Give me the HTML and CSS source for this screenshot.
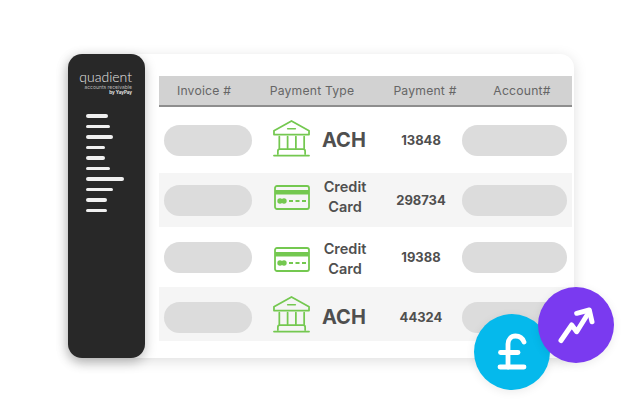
FILE: index.html
```html
<!DOCTYPE html>
<html lang="en">
<head>
<meta charset="utf-8">
<title>Payments</title>
<link rel="stylesheet" href="styles.css">
</head>
<body>
<svg class="defs" width="0" height="0" aria-hidden="true">
  <symbol id="bank" viewBox="0 0 38 38">
    <g fill="none" stroke="#74c850" stroke-width="1.800" stroke-linejoin="round" stroke-linecap="round">
      <path d="M19 1 1 11v4h36v-4z"/>
      <path d="M15 9h8" stroke-width="1.500"/>
      <path d="M6.500 17v12M15 17v12M23.500 17v12M32 17v12"/>
      <path d="M5 35v-3q0-2 2-2h24q2 0 2 2v3"/>
      <path d="M1 36.500h36"/>
    </g>
  </symbol>
  <symbol id="card" viewBox="0 0 36 25">
    <rect x="1" y="1" width="34" height="23" rx="2" fill="none" stroke="#74c850" stroke-width="1.800"/>
    <rect x="1" y="5" width="34" height="4.500" fill="#74c850"/>
    <circle cx="6" cy="16" r="2.700" fill="#74c850"/>
    <circle cx="10" cy="16" r="2.700" fill="#74c850"/>
    <path d="M15 16h17" stroke="#74c850" stroke-width="1.800" stroke-dasharray="4 2.500"/>
  </symbol>
</svg>
<main class="stage">
  <section class="panel">
    <aside class="sidebar">
      <div class="logo">
        <div class="logo-name">quadient</div>
        <div class="logo-sub">accounts receivable</div>
        <div class="logo-by">by YayPay</div>
      </div>
      <div class="menu">
        <span class="bar w22"></span>
        <span class="bar w24"></span>
        <span class="bar w26"></span>
        <span class="bar w18"></span>
        <span class="bar w18"></span>
        <span class="bar w23"></span>
        <span class="bar w38"></span>
        <span class="bar w26"></span>
        <span class="bar w20"></span>
        <span class="bar w20"></span>
      </div>
    </aside>
    <div class="content">
      <div class="thead">
        <div>Invoice #</div>
        <div>Payment Type</div>
        <div>Payment #</div>
        <div>Account#</div>
      </div>
      <div class="row row-first">
        <span class="pill"></span>
        <div class="type"><svg class="bank"><use href="#bank"/></svg><span class="ach">ACH</span></div>
        <div class="num">13848</div>
        <span class="pill"></span>
      </div>
      <div class="row row-alt row-second">
        <span class="pill"></span>
        <div class="type type-card"><svg class="card"><use href="#card"/></svg><span class="credit">Credit<br>Card</span></div>
        <div class="num">298734</div>
        <span class="pill"></span>
      </div>
      <div class="row row-third">
        <span class="pill"></span>
        <div class="type type-card"><svg class="card"><use href="#card"/></svg><span class="credit">Credit<br>Card</span></div>
        <div class="num">19388</div>
        <span class="pill"></span>
      </div>
      <div class="row row-alt row-fourth">
        <span class="pill"></span>
        <div class="type"><svg class="bank"><use href="#bank"/></svg><span class="ach">ACH</span></div>
        <div class="num">44324</div>
        <span class="pill"></span>
      </div>
    </div>
    <div class="badge badge-blue">
      <svg width="30" height="38" viewBox="0 0 30 38" fill="none" stroke="#fff" stroke-width="4.800" stroke-linecap="round" stroke-linejoin="round">
        <path d="M27 9C25.500 5 22 3 18.500 3 14 3 11 6.500 11 11v23"/>
        <path d="M3.500 19.500h17.500"/>
        <path d="M3 34h24"/>
      </svg>
    </div>
    <div class="badge badge-purple">
      <svg width="40" height="40" viewBox="0 0 40 40" fill="none" stroke="#fff" stroke-width="5" stroke-linecap="round" stroke-linejoin="round">
        <path d="M5 35.500 15.700 20l5 6.700L33 7"/>
        <path d="M20.700 8.300 33.300 5 36 16.700"/>
      </svg>
    </div>
  </section>
</main>
</body>
</html>
```
FILE: styles.css
```css
* { box-sizing: border-box; }
html, body { margin: 0; padding: 0; background: #fff; }
body { width: 644px; height: 417px; overflow: hidden; font-family: "Inter", "Liberation Sans", sans-serif; }
.defs { display: block; height: 0; }
.stage { padding: 54px 0 0 68px; }
.panel {
  position: relative;
  display: flex;
  width: 506px;
  height: 304px;
  background: #fff;
  border-radius: 14px;
  box-shadow: 0 3px 14px rgba(0, 0, 0, .13);
}
.sidebar {
  flex: 0 0 77px;
  background: #282828;
  border-radius: 14px;
  box-shadow: 0 4px 12px rgba(0, 0, 0, .25);
  padding-top: 16px;
}
.logo { width: 58px; margin-left: 6px; color: #e6e6e6; text-align: right; }
.logo-name { font-family: "Lato", sans-serif; font-weight: 300; font-size: 14px; line-height: 14px; height: 14px; }
.logo-sub { font-size: 5px; line-height: 6px; height: 6px; color: #b8b8b8; white-space: nowrap; }
.logo-by { font-size: 4.500px; line-height: 6px; height: 6px; font-weight: 700; }
.menu { display: flex; flex-direction: column; gap: 7px; margin: 18px 0 0 18px; }
.bar { display: block; height: 3.500px; border-radius: 2px; background: #f0f0f0; }
.w18 { width: 19px; }
.w20 { width: 21px; }
.w22 { width: 22px; }
.w23 { width: 24px; }
.w24 { width: 24px; }
.w26 { width: 27px; }
.w38 { width: 38px; }
.content { flex: 1; padding: 22px 2px 0 14px; }
.thead {
  display: grid;
  grid-template-columns: 90px 126px 100px 94px;
  height: 31px;
  background: #d2d2d2;
  border-bottom: 2.500px solid #8e8e8e;
  color: #666;
  font-size: 12.200px;
  line-height: 30px;
  text-align: center;
  letter-spacing: .2px;
}
.row {
  display: grid;
  grid-template-columns: 88px 128px 82px 105px;
  align-items: center;
  padding-left: 5px;
  color: #4f4f4f;
}
.row-first { height: 66px; }
.row-second { height: 54px; }
.row-third { height: 60px; }
.row-fourth { height: 54px; padding-top: 6px; }
.row-alt { background: #f5f5f5; }
.pill { display: block; height: 31px; border-radius: 16px; background: #dcdcdc; }
.type { display: flex; align-items: center; padding-left: 21px; }
.row-second .type { margin-bottom: 6px; }
.row-third .type { margin-top: 4px; }
.bank { width: 37px; height: 37px; flex: none; margin-bottom: 4px; }
.row-fourth .bank { margin-bottom: 5px; }
.card { width: 36px; height: 25px; flex: none; margin-left: 1px; }
.ach { margin-left: 12px; font-size: 20px; font-weight: 700; }
.credit { width: 56px; margin-left: 7px; font-size: 14.500px; line-height: 20px; font-weight: 600; text-align: center; }
.num { font-size: 13px; font-weight: 700; text-align: center; }
.badge {
  position: absolute;
  display: flex;
  align-items: center;
  justify-content: center;
  width: 76px;
  height: 76px;
  border-radius: 50%;
  box-shadow: 0 2px 10px rgba(0, 0, 0, .08);
}
.badge-blue { left: 406px; top: 260px; background: #05b9ec; }
.badge-purple { left: 470px; top: 233px; background: #7a3af0; }
```
